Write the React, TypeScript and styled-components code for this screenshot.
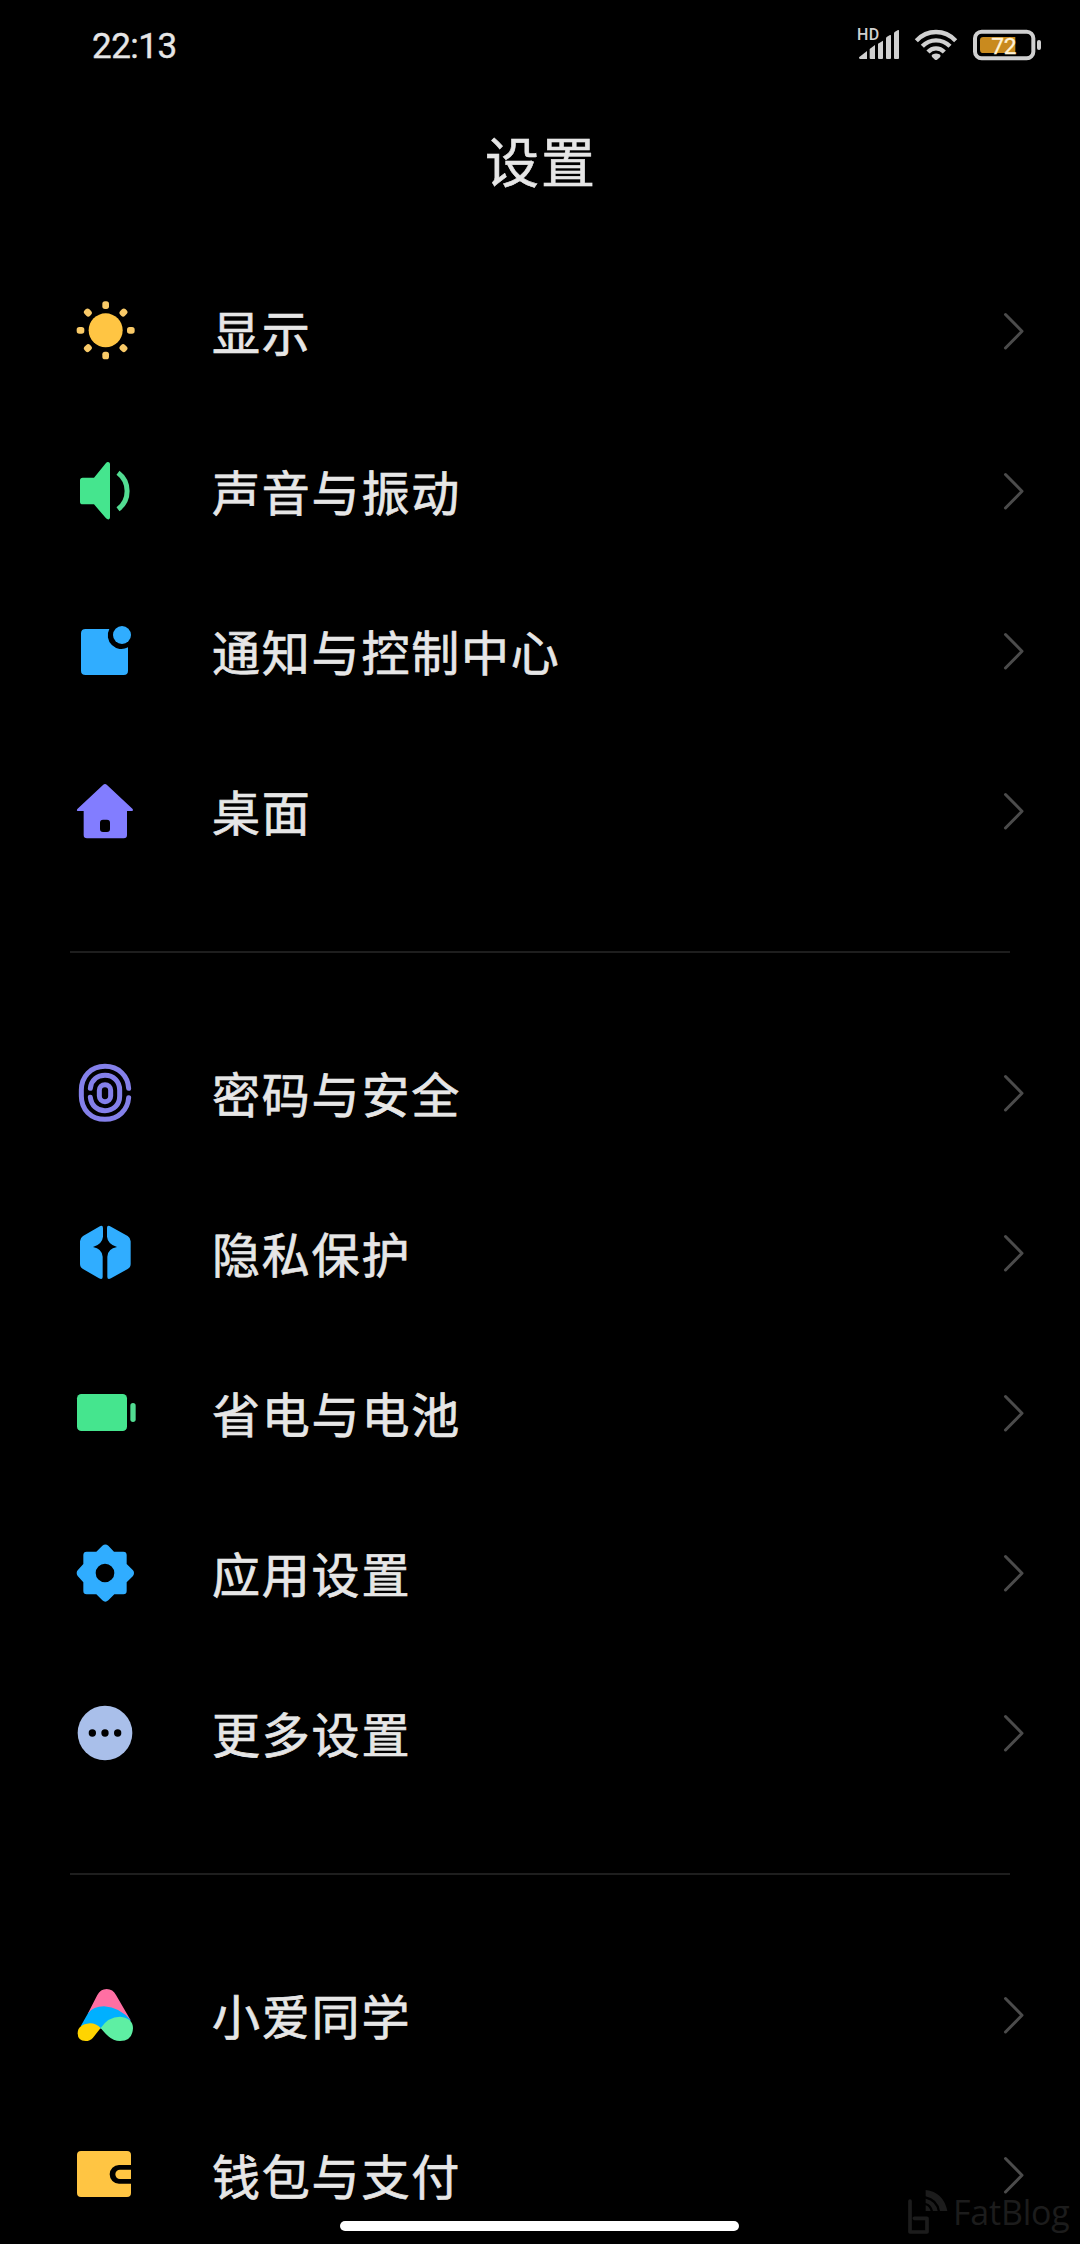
import React from 'react';
import styled, { createGlobalStyle } from 'styled-components';

const GlobalStyle = createGlobalStyle`
  * { box-sizing: border-box; }
  body { margin: 0; background: #000; }
`;

const Screen = styled.main`
  position: relative;
  width: 1080px;
  height: 2244px;
  overflow: hidden;
  background: #000;
  color: #e6e6e6;
  font-family: 'Noto Sans CJK SC', sans-serif;
`;

const StatusBar = styled.header`
  display: flex;
  justify-content: space-between;
  align-items: center;
  height: 90px;
  padding: 0 38px 0 92px;
`;

const Clock = styled.time`
  padding-top: 3px;
  font-family: Roboto, sans-serif;
  font-size: 35px;
  line-height: 40px;
  letter-spacing: -0.5px;
  -webkit-text-stroke: 0.4px currentColor;
`;

const StatusIcons = styled.svg`
  display: block;
  width: 186px;
  height: 50px;
`;

const Title = styled.h1`
  margin: 0;
  height: 161px;
  padding-top: 30px;
  padding-left: 2px;
  text-align: center;
  font-size: 54px;
  line-height: 80px;
  font-weight: 400;
  letter-spacing: 2px;
  -webkit-text-stroke: 0.6px currentColor;
`;

const Group = styled.section`
  display: flex;
  flex-direction: column;
`;

const Divider = styled.hr`
  height: 2px;
  margin: 60px 70px;
  border: 0;
  background: #1e1e1e;
`;

const Row = styled.div`
  display: grid;
  grid-template-columns: 72px 1fr 24px;
  column-gap: 71px;
  align-items: center;
  height: 160px;
  padding: 0 54px 0 69px;
`;

const Icon = styled.svg`
  display: block;
  width: 72px;
  height: 72px;
`;

const Label = styled.span`
  padding-bottom: 3px;
  font-size: 48px;
  line-height: 72px;
  letter-spacing: 1.8px;
  white-space: nowrap;
  -webkit-text-stroke: 0.7px currentColor;
`;

const Chevron = styled.svg`
  display: block;
  width: 24px;
  height: 40px;
`;

const HomeIndicator = styled.div`
  position: absolute;
  left: 340px;
  top: 2221px;
  width: 399px;
  height: 10px;
  border-radius: 5px;
  background: #fff;
`;

const Watermark = styled.div`
  position: absolute;
  left: 906px;
  top: 2188px;
  display: flex;
  align-items: flex-start;
  color: #1c1c1c;
`;

const WatermarkMark = styled.svg`
  display: block;
  width: 44px;
  height: 48px;
`;

const WatermarkText = styled.span`
  margin-left: 3px;
  margin-top: 2px;
  font-family: 'Open Sans', sans-serif;
  font-size: 34px;
  line-height: 44px;
  letter-spacing: -0.2px;
`;

type Item = { label: string; viewBox: string; art: React.ReactNode };

const rays = [0, 45, 90, 135, 180, 225, 270, 315];

const display: Item[] = [
  {
    label: '显示',
    viewBox: '27 45 216 216',
    art: (
      <>
        <circle cx="137" cy="151" r="51" fill="#ffc543" />
        {rays.map((a) => (
          <rect key={a} x="127" y="64" width="20" height="23" rx="8" fill="#f9ca68" transform={`rotate(${a} 137 151)`} />
        ))}
      </>
    ),
  },
  {
    label: '声音与振动',
    viewBox: '27 525 216 216',
    art: (
      <>
        <path d="M68 593H102L138 549Q142 545 147 547Q150 549 150 553V712Q150 716 147 718Q142 719 138 715L102 673H68Q60 673 60 665V601Q60 593 68 593Z" fill="#45e58e" />
        <path d="M174 578A69 69 0 0 1 174 688" fill="none" stroke="#52dc92" strokeWidth="15" />
      </>
    ),
  },
  {
    label: '通知与控制中心',
    viewBox: '27 45 216 216',
    art: (
      <>
        <path d="M77 87H148A41 41 0 0 0 204 142V212Q204 225 191 225H77Q63 225 63 212V100Q63 87 77 87Z" fill="#30adff" />
        <circle cx="186" cy="105" r="27" fill="#30adff" />
      </>
    ),
  },
  {
    label: '桌面',
    viewBox: '27 525 216 216',
    art: (
      <path
        fillRule="evenodd"
        d="M129 555Q135 549 141 555L218 627Q221 633 214 633H201V705Q201 715 191 715H81Q71 715 71 705V633H55Q48 633 52 627ZM129 659Q120 659 120 668V687Q120 696 129 696H141Q150 696 150 687V668Q150 659 141 659Z"
        fill="#827dff"
      />
    ),
  },
];

const system: Item[] = [
  {
    label: '密码与安全',
    viewBox: '27 51 216 216',
    art: (
      <g fill="none" stroke="#8480ea" strokeWidth="15" strokeLinecap="round">
        <path d="M206 145C204 108 176 79 135 79C92 79 64 110 64 150V168C64 208 92 238 135 238C176 238 203 210 206 173" />
        <path d="M91 145C94 120 112 106 135 106C161 106 179 124 179 150V168C179 194 161 212 135 212C112 212 94 197 91 172" />
        <rect x="118" y="134" width="34" height="51" rx="17" />
      </g>
    ),
  },
  {
    label: '隐私保护',
    viewBox: '27 531 216 216',
    art: (
      <g fill="#30adff">
        <path d="M117 560Q129 553 129 564V590Q127 612 99 621Q126 626 128 650V711Q128 720 117 715L69 687Q60 682 60 672V604Q60 594 69 588Z" />
        <path d="M153 560Q141 553 141 564V590Q143 612 171 621Q143 626 142 650V711Q142 720 153 715L203 687Q212 682 212 672V604Q212 594 203 588Z" />
      </g>
    ),
  },
  {
    label: '省电与电池',
    viewBox: '27 21 216 216',
    art: (
      <>
        <rect x="51" y="72" width="150" height="111" rx="13" fill="#45e58e" />
        <rect x="211" y="99" width="16" height="57" rx="8" fill="#52dc92" />
      </>
    ),
  },
  {
    label: '应用设置',
    viewBox: '27 501 216 216',
    art: (
      <path
        fillRule="evenodd"
        d="M127 527Q136 520 145 527L162 545H190Q200 545 200 555V582L219 601Q225 609 219 618L200 637V663Q200 673 190 673H163L145 691Q136 699 127 691L109 673H80Q70 673 70 663V637L53 618Q47 609 53 601L70 582V555Q70 545 80 545H109ZM135 581A28 28 0 1 0 135 637A28 28 0 1 0 135 581Z"
        fill="#30adff"
      />
    ),
  },
  {
    label: '更多设置',
    viewBox: '27 51 216 216',
    art: (
      <>
        <circle cx="135" cy="159" r="82" fill="#a9bfea" />
        <circle cx="97" cy="159" r="11" />
        <circle cx="135" cy="159" r="11" />
        <circle cx="173" cy="159" r="11" />
      </>
    ),
  },
];

const services: Item[] = [
  {
    label: '小爱同学',
    viewBox: '27 57 216 216',
    art: (
      <>
        <path d="M84 160L112 105Q121 87 140 87Q159 87 168 105L212 181Q170 150 84 160Z" fill="#ff6fa3" />
        <path d="M62 199L84 160Q100 139 132 139Q180 142 212 181L200 195L122 206Q105 192 62 199Z" fill="#00b0ff" />
        <path d="M122 204Q109 190 90 190Q53 194 53 220Q53 243 77 243Q90 243 99 233Z" fill="#ffd400" />
        <path d="M122 204Q145 170 180 170Q219 174 219 205Q217 243 180 243Q160 243 145 229Q134 219 122 204Z" fill="#5eefa3" />
      </>
    ),
  },
  {
    label: '钱包与支付',
    viewBox: '27 537 216 216',
    art: (
      <path
        d="M63 573H201Q213 573 213 585V615H177A28 28 0 0 0 177 671H213V699Q213 711 201 711H63Q51 711 51 699V585Q51 573 63 573ZM213 629V657H180A14 14 0 0 1 180 629Z"
        fill="#ffc543"
      />
    ),
  },
];

function Rows({ items }: { items: Item[] }) {
  return (
    <Group>
      {items.map((item) => (
        <Row key={item.label}>
          <Icon viewBox={item.viewBox}>{item.art}</Icon>
          <Label>{item.label}</Label>
          <Chevron viewBox="0 0 24 40" fill="none" stroke="#4b4b4b" strokeWidth="3" strokeLinecap="round" strokeLinejoin="round">
            <path d="M3.5 3.5L20 20.3L3.5 37" />
          </Chevron>
        </Row>
      ))}
    </Group>
  );
}

export default function App() {
  return (
    <>
      <GlobalStyle />
      <Screen>
        <StatusBar>
          <Clock>22:13</Clock>
          <StatusIcons viewBox="48 30 558 150">
            <g fill="#d0d0d0">
              <text x="51" y="91" fontFamily="Roboto, sans-serif" fontSize="48" fontWeight="500" letterSpacing="1">HD</text>
              <path d="M57 142L81 123V147H60Q57 147 57 142Z" />
              <path d="M89 117L105 105V147H92Q89 147 89 144Z" />
              <path d="M114 101L129 92V144Q129 147 126 147H117Q114 147 114 144Z" />
              <path d="M138 85Q138 82 141 80L150 75Q153 74 153 77V144Q153 147 150 147H141Q138 147 138 144Z" />
              <path d="M162 70Q162 67 165 65L174 60Q177 59 177 62V144Q177 147 174 147H165Q162 147 162 144Z" />
              <path d="M277 142Q272 136 279 133Q288 128 298 133Q304 136 300 142L291 149Q288 151 285 149Z" />
              <rect x="591" y="90" width="12" height="30" rx="6" />
            </g>
            <g fill="none" stroke="#d0d0d0" strokeWidth="13">
              <path d="M229 92Q254 66 288 66Q322 66 347 92" />
              <path d="M247 109Q264 91 288 91Q312 91 330 109" />
              <path d="M264 126Q274 115 288 115Q302 115 313 126" />
            </g>
            <rect x="405" y="65" width="175" height="80" rx="20" fill="none" stroke="#d0d0d0" strokeWidth="12" />
            <path d="M430 81H526V129H430Q420 129 420 119V91Q420 81 430 81Z" fill="#c98a1e" />
            <text x="454" y="131" fill="#fff3d8" fontFamily="Roboto, sans-serif" fontSize="68" fontWeight="400" stroke="#fff3d8" strokeWidth="1" letterSpacing="-1">72</text>
          </StatusIcons>
        </StatusBar>
        <Title>设置</Title>
        <Rows items={display} />
        <Divider />
        <Rows items={system} />
        <Divider />
        <Rows items={services} />
        <HomeIndicator />
        <Watermark>
          <WatermarkMark viewBox="78 204 132 144">
            <path d="M90 243V336H141V295H103" fill="none" stroke="currentColor" strokeWidth="11" strokeLinecap="round" strokeLinejoin="round" />
            <path d="M137 210Q190 216 202 273H180Q174 237 137 229Z" fill="currentColor" />
            <path d="M137 236Q168 244 173 273H159Q155 254 137 249ZM137 256Q148 260 152 273H137Z" fill="currentColor" />
          </WatermarkMark>
          <WatermarkText>FatBlog</WatermarkText>
        </Watermark>
      </Screen>
    </>
  );
}
